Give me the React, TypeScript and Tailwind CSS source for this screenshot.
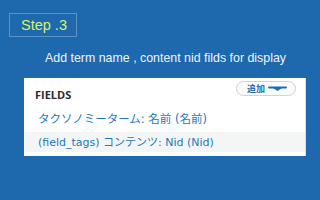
export default function App() {
  return (
    <div className="w-[320px] h-[200px] overflow-hidden bg-[#1e69ae] font-['Liberation_Sans',Arial,sans-serif]">
      {/* step label */}
      <div className="pt-[13px] pl-[9px]">
        <div className="w-[68px] h-[24px] border border-[#5b93c9] flex items-center pl-[11px] text-[14.5px] text-[#d8f36a] leading-none">
          Step .3
        </div>
      </div>

      <div className="mt-[14px] pl-[45px] text-[12.4px] leading-[14px] text-[#eef3f9]">
        Add term name , content nid filds for display
      </div>

      {/* fields panel */}
      <div className="mt-[13px] ml-[24px] w-[282px] h-[78px] bg-white border-r border-[#d9dde2] pt-[3px] font-['DejaVu_Sans','Noto_Sans_CJK_JP',sans-serif]">
        <div className="h-[26px] flex items-start justify-between pl-[11px] pr-[9px]">
          <div className="mt-[8px] text-[11px] font-bold text-[#2b2b2b] leading-none font-['Open_Sans',sans-serif]">
            FIELDS
          </div>
          <div className="h-[15px] w-[60px] rounded-full border border-[#cfd3d8] bg-[#fbfbfb] flex items-center pl-[10px] gap-[2px]">
            <span className="text-[9px] leading-none font-bold text-[#1a6fb5] font-['Noto_Sans_CJK_JP',sans-serif]">追加</span>
            <svg width="19" height="6" viewBox="0 0 19 6" className="ml-[1px]">
              <path d="M1 1.5 H18" stroke="#1a6fb5" strokeWidth="2" strokeLinecap="round" />
              <path d="M5 2 L14 2 L9.5 5 Z" fill="#1a6fb5" />
            </svg>
          </div>
        </div>
        <div className="h-[25px] flex items-center pl-[14px] text-[11.5px] text-[#1c78bc] leading-none">
          タクソノミーターム: 名前 (名前)
        </div>
        <div className="h-[20px] flex items-center pl-[14px] bg-[#f4f5f5] text-[11px] text-[#1c78bc] leading-none">
          (field_tags) コンテンツ: Nid (Nid)
        </div>
      </div>
    </div>
  );
}
